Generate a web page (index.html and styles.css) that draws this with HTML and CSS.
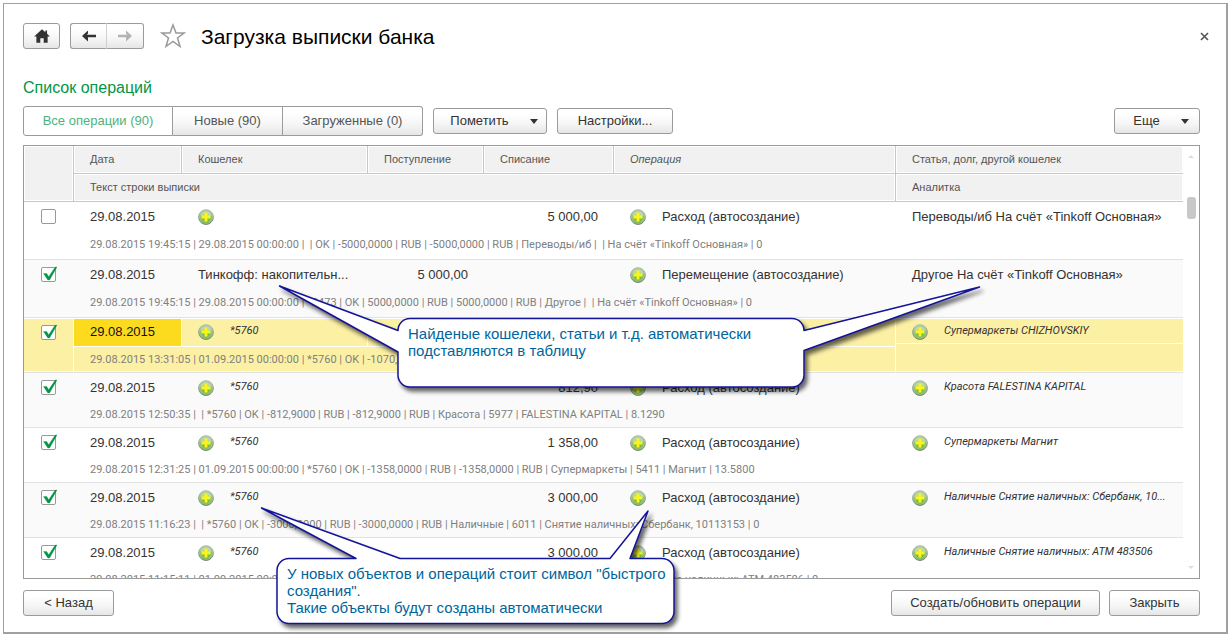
FILE: index.html
```html
<!DOCTYPE html>
<html lang="ru">
<head>
<meta charset="utf-8">
<title>Загрузка выписки банка</title>
<link rel="stylesheet" href="styles.css">
</head>
<body>
<svg class="defs" aria-hidden="true">
  <defs>
    <radialGradient id="ball" cx="0.5" cy="0.6" r="0.55">
      <stop offset="0" stop-color="#4fae1c"/>
      <stop offset="0.5" stop-color="#86c062"/>
      <stop offset="1" stop-color="#b4c9a9"/>
    </radialGradient>
    <linearGradient id="rim" x1="0" y1="0" x2="0" y2="1">
      <stop offset="0" stop-color="#b9c8b1"/>
      <stop offset="1" stop-color="#6f7d68"/>
    </linearGradient>
    <symbol id="plus" viewBox="0 0 16 16">
      <circle cx="8" cy="8" r="7.4" fill="url(#ball)" stroke="url(#rim)"/>
      <path d="M2.500 6.500a5.800 5.800 0 0 1 11 0Q8 8.500 2.500 6.500z" fill="#fff" opacity=".35"/>
      <path d="M6.800 3.800h2.400v3h3v2.400h-3v3H6.800v-3h-3V6.800h3z" fill="#fdf51a" stroke="#fdf51a" stroke-width=".5"/>
    </symbol>
    <symbol id="tick" viewBox="0 0 16 16">
      <path d="M2.500 7.500h3.200l2 3.200L14.200 1H16L8.600 14H6.800z" fill="#009646" stroke="#009646" stroke-width=".3"/>
    </symbol>
  </defs>
</svg>

<main class="window">
  <header class="titlebar">
    <button class="btn icon-btn" aria-label="Домой"><svg width="18" height="16" viewBox="0 0 16 14"><path d="M8 1 1 7.500h2V13h3.500V9h3v4H13V7.500h2L12.500 5V2H11v1.700z" fill="#333"/></svg></button>
    <div class="nav">
      <button class="btn" aria-label="Назад"><svg width="14" height="12" viewBox="0 0 14 12"><path d="M6 .5 0 6l6 5.500V7.200h8V4.800H4.800L6 3.500z" fill="#333"/></svg></button>
      <button class="btn" aria-label="Вперед"><svg width="14" height="12" viewBox="0 0 14 12"><path d="m8 .5 6 5.500-6 5.500V7.200H0V4.800h9.200L8 3.500z" fill="#b3b3b3"/></svg></button>
    </div>
    <button class="plain star" aria-label="В избранное"><svg width="26" height="26" viewBox="0 0 26 26"><path d="m13 2 3 8h8l-6.500 5 2.500 8.500-7-5-7 5L8.500 15 2 10h8z" fill="#fff" stroke="#999" stroke-width="1.500"/></svg></button>
    <h1>Загрузка выписки банка</h1>
    <button class="plain close" aria-label="Закрыть окно"><svg width="9" height="9" viewBox="0 0 9 9"><path d="m1 1 7 7M8 1 1 8" stroke="#555" stroke-width="1.600"/></svg></button>
  </header>

  <h2>Список операций</h2>

  <div class="toolbar">
    <div class="tabs">
      <button class="btn tab tab-all active">Все операции (90)</button>
      <button class="btn tab tab-new">Новые (90)</button>
      <button class="btn tab tab-loaded">Загруженные (0)</button>
    </div>
    <button class="btn mark">Пометить<span class="caret"></span></button>
    <button class="btn wide">Настройки...</button>
    <button class="btn more">Еще<span class="caret"></span></button>
  </div>

  <section class="list">
    <div class="viewport">
      <table>
        <colgroup><col class="c-check"><col class="c-date"><col class="c-wallet"><col class="c-in"><col class="c-out"><col class="c-op"><col></colgroup>
        <thead>
          <tr><th rowspan="2"></th><th>Дата</th><th>Кошелек</th><th>Поступление</th><th>Списание</th><th><i>Операция</i></th><th class="last">Статья, долг, другой кошелек</th></tr>
          <tr><th colspan="5">Текст строки выписки</th><th class="last">Аналитка</th></tr>
        </thead>
        <tbody class="tall">
          <tr><td rowspan="2" class="check"><label class="box"><input type="checkbox" aria-label="Операция 1"></label></td><td>29.08.2015</td><td><div class="item"><svg class="plus"><use href="#plus"/></svg></div></td><td></td><td class="num">5 000,00</td><td><div class="item"><svg class="plus"><use href="#plus"/></svg>Расход (автосоздание)</div></td><td rowspan="2" class="article"><div class="item">Переводы/иб На счёт «Tinkoff Основная»</div></td></tr>
          <tr class="raw"><td colspan="5">29.08.2015 19:45:15 | 29.08.2015 00:00:00 | &nbsp;| OK | -5000,0000 | RUB | -5000,0000 | RUB | Переводы/иб | &nbsp;| На счёт «Tinkoff Основная» | 0</td></tr>
        </tbody>
        <tbody class="tall odd">
          <tr><td rowspan="2" class="check"><label class="box"><input type="checkbox" checked aria-label="Операция 2"><svg><use href="#tick"/></svg></label></td><td>29.08.2015</td><td>Тинкофф: накопительн...</td><td class="num">5 000,00</td><td></td><td><div class="item"><svg class="plus"><use href="#plus"/></svg>Перемещение (автосоздание)</div></td><td rowspan="2" class="article"><div class="item">Другое На счёт «Tinkoff Основная»</div></td></tr>
          <tr class="raw"><td colspan="5">29.08.2015 19:45:15 | 29.08.2015 00:00:00 | *2473 | OK | 5000,0000 | RUB | 5000,0000 | RUB | Другое | &nbsp;| На счёт «Tinkoff Основная» | 0</td></tr>
        </tbody>
        <tbody class="selected">
          <tr><td rowspan="2" class="check"><label class="box"><input type="checkbox" checked aria-label="Операция 3"><svg><use href="#tick"/></svg></label></td><td class="current">29.08.2015</td><td><div class="item"><svg class="plus"><use href="#plus"/></svg><i>*5760</i></div></td><td></td><td class="num"></td><td></td><td rowspan="2" class="article"><div class="item"><svg class="plus"><use href="#plus"/></svg><i>Супермаркеты CHIZHOVSKIY</i></div></td></tr>
          <tr class="raw"><td colspan="5">29.08.2015 13:31:05 | 01.09.2015 00:00:00 | *5760 | OK | -1070,2000</td></tr>
        </tbody>
        <tbody class="odd">
          <tr><td rowspan="2" class="check"><label class="box"><input type="checkbox" checked aria-label="Операция 4"><svg><use href="#tick"/></svg></label></td><td>29.08.2015</td><td><div class="item"><svg class="plus"><use href="#plus"/></svg><i>*5760</i></div></td><td></td><td class="num">812,90</td><td><div class="item"><svg class="plus"><use href="#plus"/></svg>Расход (автосоздание)</div></td><td rowspan="2" class="article"><div class="item"><svg class="plus"><use href="#plus"/></svg><i>Красота FALESTINA KAPITAL</i></div></td></tr>
          <tr class="raw"><td colspan="5">29.08.2015 12:50:35 | &nbsp;| *5760 | OK | -812,9000 | RUB | -812,9000 | RUB | Красота | 5977 | FALESTINA KAPITAL | 8.1290</td></tr>
        </tbody>
        <tbody>
          <tr><td rowspan="2" class="check"><label class="box"><input type="checkbox" checked aria-label="Операция 5"><svg><use href="#tick"/></svg></label></td><td>29.08.2015</td><td><div class="item"><svg class="plus"><use href="#plus"/></svg><i>*5760</i></div></td><td></td><td class="num">1 358,00</td><td><div class="item"><svg class="plus"><use href="#plus"/></svg>Расход (автосоздание)</div></td><td rowspan="2" class="article"><div class="item"><svg class="plus"><use href="#plus"/></svg><i>Супермаркеты Магнит</i></div></td></tr>
          <tr class="raw"><td colspan="5">29.08.2015 12:31:25 | 01.09.2015 00:00:00 | *5760 | OK | -1358,0000 | RUB | -1358,0000 | RUB | Супермаркеты | 5411 | Магнит | 13.5800</td></tr>
        </tbody>
        <tbody class="odd">
          <tr><td rowspan="2" class="check"><label class="box"><input type="checkbox" checked aria-label="Операция 6"><svg><use href="#tick"/></svg></label></td><td>29.08.2015</td><td><div class="item"><svg class="plus"><use href="#plus"/></svg><i>*5760</i></div></td><td></td><td class="num">3 000,00</td><td><div class="item"><svg class="plus"><use href="#plus"/></svg>Расход (автосоздание)</div></td><td rowspan="2" class="article"><div class="item"><svg class="plus"><use href="#plus"/></svg><i>Наличные Снятие наличных: Сбербанк, 10...</i></div></td></tr>
          <tr class="raw"><td colspan="5">29.08.2015 11:16:23 | &nbsp;| *5760 | OK | -3000,0000 | RUB | -3000,0000 | RUB | Наличные | 6011 | Снятие наличных: Сбербанк, 10113153 | 0</td></tr>
        </tbody>
        <tbody>
          <tr><td rowspan="2" class="check"><label class="box"><input type="checkbox" checked aria-label="Операция 7"><svg><use href="#tick"/></svg></label></td><td>29.08.2015</td><td><div class="item"><svg class="plus"><use href="#plus"/></svg><i>*5760</i></div></td><td></td><td class="num">3 000,00</td><td><div class="item"><svg class="plus"><use href="#plus"/></svg>Расход (автосоздание)</div></td><td rowspan="2" class="article"><div class="item"><svg class="plus"><use href="#plus"/></svg><i>Наличные Снятие наличных: ATM 483506</i></div></td></tr>
          <tr class="raw"><td colspan="5">29.08.2015 11:15:11 | 01.09.2015 00:00:00 | *5760 | OK | -3000,0000 | RUB | -3000,0000 | RUB | Наличные | 6011 | Снятие наличных: ATM 483506 | 0</td></tr>
        </tbody>
      </table>
    </div>
    <div class="scrollbar"><span class="arrow up"></span><span class="thumb"></span><span class="arrow down"></span></div>
  </section>

  <footer>
    <button class="btn small">&lt; Назад</button>
    <button class="btn create">Создать/обновить операции</button>
    <button class="btn small">Закрыть</button>
  </footer>
</main>

<svg class="callouts" width="1231" height="637" viewBox="0 0 1231 637" aria-hidden="true">
  <g fill="#fff" stroke="#14149a" stroke-width="1.500" stroke-linejoin="round">
    <path d="M410 318.500H792a12 12 0 0 1 12 12L979.500 287 804 350.500V375a12 12 0 0 1-12 12H410a12 12 0 0 1-12-12V352L279.500 286 398 330.500a12 12 0 0 1 12-12z"/>
    <path d="M289 558.500H356L261.500 508 400 558.500H610L648 511 630 558.500H662a12 12 0 0 1 12 12V611.500a12 12 0 0 1-12 12H289a12 12 0 0 1-12-12V570.500a12 12 0 0 1 12-12z"/>
  </g>
</svg>
<p class="note note-found">Найденые кошелеки, статьи и т.д. автоматически<br>подставляются в таблицу</p>
<p class="note note-new">У новых объектов и операций стоит символ "быстрого<br>создания".<br>Такие объекты будут созданы автоматически</p>
</body>
</html>
```
FILE: styles.css
```css
* { box-sizing: border-box; }

body {
  margin: 0;
  padding: 3px;
  height: 100vh;
  background: #fff;
  color: #333;
  font: 13px/16px "Liberation Sans", Arial, sans-serif;
}

h1, h2, p { margin: 0; font-weight: 400; }

.defs { position: absolute; width: 0; height: 0; }

.window {
  display: flex;
  flex-direction: column;
  height: 100%;
  padding: 19px 26px 16px 19px;
  border: 1px solid #a0a0a0;
  border-right-width: 2px;
  border-bottom-width: 2px;
}

.btn {
  display: flex;
  align-items: center;
  justify-content: center;
  height: 26px;
  padding: 0;
  border: 1px solid #9b9b9b;
  border-radius: 3px;
  background: linear-gradient(#fff 20%, #f6f6f6 60%, #e6e6e6);
  color: #333;
  font: inherit;
}

.plain { display: flex; padding: 0; border: 0; background: none; }

.titlebar { display: flex; align-items: center; height: 26px; }
.icon-btn { width: 37px; margin-right: 10px; }
.nav { display: flex; }
.nav .btn { width: 37px; }
.nav .btn:first-child { border-radius: 3px 0 0 3px; border-right-color: #d0d0d0; }
.nav .btn:last-child { border-left: 0; border-radius: 0 3px 3px 0; }
.star { margin: 0 15px 0 16px; }
.close { margin: 0 -9px 0 auto; }

h1 { padding-top: 2px; color: #000; font-size: 21px; line-height: 24px; }
h2 { margin-top: 29px; color: #009646; font-size: 16px; line-height: 20px; }

.toolbar { display: flex; align-items: center; gap: 10px; margin: 8px 0 9px; }
.tabs { display: flex; }
.tab { height: 30px; color: #555; border-left: 0; border-radius: 0; }
.tab-all { width: 150px; border-left: 1px solid #9b9b9b; border-radius: 3px 0 0 3px; }
.tab-new { width: 110px; }
.tab-loaded { width: 140px; border-radius: 0 3px 3px 0; }
.active { background: #fff; color: #4db27d; }
.mark { width: 114px; gap: 21px; padding-left: 8px; }
.wide { width: 116px; }
.more { width: 86px; gap: 21px; padding-left: 8px; margin-left: auto; }
.caret { border: 4px solid transparent; border-top: 5px solid #333; border-bottom: 0; }

.list { display: flex; flex: 1; min-height: 0; border: 1px solid #9b9b9b; }
.viewport { flex: 1; min-width: 0; overflow: hidden; }

table { width: 100%; border-collapse: separate; border-spacing: 0; table-layout: fixed; }
.c-check { width: 50px; }
.c-date { width: 108px; }
.c-wallet { width: 186px; }
.c-in { width: 116px; }
.c-out { width: 130px; }
.c-op { width: 282px; }

th {
  height: 28px;
  padding: 0 16px 2px;
  border: solid #c8c8c8;
  border-width: 0 1px 1px 0;
  background: #f1f1f1;
  box-shadow: inset 0 0 0 1px #fff;
  color: #555;
  font-size: 11px;
  font-weight: 400;
  text-align: left;
}
th.last { border-right: 0; }

td { height: 29px; padding: 0 16px; white-space: nowrap; }
.raw td { height: 26px; color: #808080; font-family: Roboto, "Liberation Sans", sans-serif; font-size: 11px; border-bottom: 1px solid #e2e2e2; }
.tall .raw td { height: 29px; }
.odd { background: #fafafa; }
td.check, td.article { border-bottom: 1px solid #e2e2e2; vertical-align: top; }
td.article { padding: 0; }
.article .item { height: 29px; padding-left: 16px; }
.num { text-align: right; }
.item { display: flex; align-items: center; gap: 16px; }
.item i { padding: 0 0 2px; font-family: Roboto, "Liberation Sans", sans-serif; font-size: 11px; }
.plus { flex: none; width: 16px; height: 16px; }

.selected td { background: #fcf0a5; border-right: 1px solid #fff; border-bottom: 1px solid #fff; box-shadow: inset 0 1px #fff; }
.selected .raw td { box-shadow: inset 0 -1px #fff; border-bottom-color: #e2e2e2; }
.selected td.check, .selected td.article { box-shadow: inset 0 1px #fff, inset 0 -1px #fff; border-bottom-color: #e2e2e2; }
.selected td.article { border-right: 0; }
.selected .article .item { border-bottom: 1px solid #fff; height: 26px; padding-top: 3px; }
.selected td.current { background: #fcdb1f; color: #111; }

td.check { padding: 7px 0 0 17px; }
.box { position: relative; display: block; width: 15px; height: 15px; }
.box input { appearance: none; display: block; width: 15px; height: 15px; margin: 0; border: 1px solid #999; border-radius: 2px; background: #fff; }
.box svg { position: absolute; left: 0; top: -1px; width: 16px; height: 16px; }

.scrollbar { display: flex; flex-direction: column; align-items: center; width: 16px; padding: 9px 0; }
.arrow { border: 3px solid transparent; }
.up { border-top: 0; border-bottom-color: #ddd; }
.down { margin-top: auto; border-bottom: 0; border-top-color: #ddd; }
.thumb { width: 9px; height: 22px; margin-top: 39px; border-radius: 3px; background: #c8c8c8; }

footer { display: flex; gap: 9px; margin-top: 11px; }
.small { width: 91px; }
.create { width: 209px; margin-left: auto; }

.callouts { position: absolute; left: 0; top: 0; pointer-events: none; filter: drop-shadow(3px 4px 2px rgba(0, 0, 0, .6)); }
.note { position: absolute; color: #00659c; font-size: 15px; line-height: 17px; white-space: nowrap; }
.note-found { left: 408px; top: 325px; }
.note-new { left: 287px; top: 565px; }
```
